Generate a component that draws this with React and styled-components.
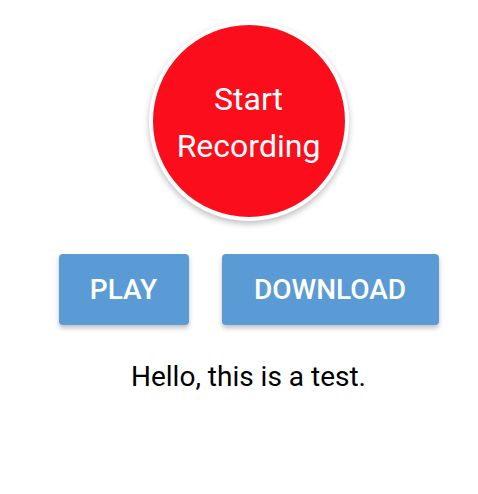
import React from "react";
import styled, { createGlobalStyle } from "styled-components";

const Global = createGlobalStyle`
  html, body { margin: 0; padding: 0; background: #fff; }
  body { font-family: Roboto, "Noto Sans", sans-serif; }
`;

const Page = styled.div`
  width: 478px;
  height: 494px;
  display: flex;
  flex-direction: column;
  align-items: center;
  padding: 21px 0 0 19px;
  box-sizing: border-box;
`;

const RecordButton = styled.button`
  width: 200px;
  height: 200px;
  border-radius: 50%;
  border: 4px solid #fff;
  background: #fc0d1b;
  color: #fff;
  font-family: Roboto, sans-serif;
  font-size: 32px;
  line-height: 47px;
  box-shadow: 0 3px 6px rgba(0, 0, 0, 0.25);
  box-sizing: border-box;
  padding: 4px 0 0;
  display: flex;
  align-items: center;
  justify-content: center;
  text-align: center;
`;

const Row = styled.div`
  display: flex;
  gap: 33px;
  margin-top: 33px;
`;

const ActionButton = styled.button`
  height: 71px;
  padding: 0;
  border: none;
  border-radius: 4px;
  background: #5b9bd5;
  color: #fff;
  font-family: Roboto, sans-serif;
  font-weight: 500;
  font-size: 28px;
  text-transform: uppercase;
  box-shadow: 0 3px 5px rgba(0, 0, 0, 0.25);
  width: ${(p) => p.$w}px;
`;

const Message = styled.p`
  margin: 35px 0 0;
  font-family: Roboto, sans-serif;
  font-size: 28px;
  color: #000;
`;

export default function App() {
  return (
    <>
      <Global />
      <Page>
        <RecordButton>
          Start
          <br />
          Recording
        </RecordButton>
        <Row>
          <ActionButton $w={130}>Play</ActionButton>
          <ActionButton $w={217}>Download</ActionButton>
        </Row>
        <Message>Hello, this is a test.</Message>
      </Page>
    </>
  );
}
